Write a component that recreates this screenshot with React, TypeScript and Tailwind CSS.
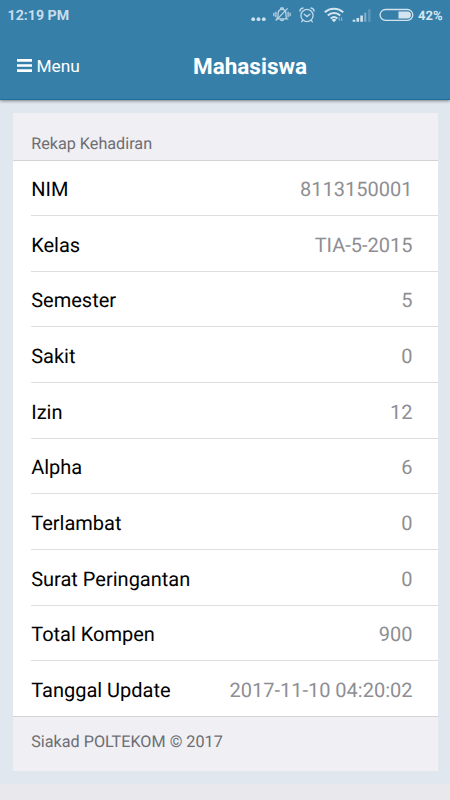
const rows: [string, string][] = [
  ["NIM", "8113150001"],
  ["Kelas", "TIA-5-2015"],
  ["Semester", "5"],
  ["Sakit", "0"],
  ["Izin", "12"],
  ["Alpha", "6"],
  ["Terlambat", "0"],
  ["Surat Peringantan", "0"],
  ["Total Kompen", "900"],
  ["Tanggal Update", "2017-11-10 04:20:02"],
];

function MoreIcon() {
  return (
    <svg className="h-4 w-[15px]" viewBox="0 0 15 16" fill="#cfe1f0">
      <circle cx="2.2" cy="12.2" r="1.9" />
      <circle cx="7.5" cy="12.2" r="1.9" />
      <circle cx="12.8" cy="12.2" r="1.9" />
    </svg>
  );
}

function MutedBellIcon() {
  return (
    <svg className="ml-[7px] h-4 w-[18px]" viewBox="0 0 18 16" fill="none" stroke="#b9d4e6" strokeWidth="1.3">
      <path d="M4 11.8H14C12.8 10.8 12.9 9.5 12.9 6.5C12.9 4 11.3 2.3 9 2.3S5.1 4 5.1 6.5C5.1 9.5 5.2 10.8 4 11.8ZM7.6 2.2L8 .8H10L10.4 2.2M7.3 12.3C7.5 14.1 10.5 14.1 10.7 12.3M2.8 13.6L14.6 1.4M2.9 4.7V10.3M.9 5.7V9.3M15.1 4.7V10.3M17.1 5.7V9.3" />
    </svg>
  );
}

function AlarmIcon() {
  return (
    <svg className="ml-[8px] h-4 w-4" viewBox="0 0 16 16" fill="none" stroke="#c3daea" strokeWidth="1.3" strokeLinecap="round">
      <circle cx="8" cy="8.5" r="6.1" />
      <path d="M.9 4.1C1.1 2.4 2.3 1.3 4 1M15.1 4.1C14.9 2.4 13.7 1.3 12 1M5.2 7.2L8 9.6L10.9 7.2M3.8 13.4L2.7 14.7M12.2 13.4L13.3 14.7" />
    </svg>
  );
}

function WifiIcon() {
  return (
    <svg className="ml-[9px] h-4 w-5" viewBox="0 0 20 16" fill="none" stroke="#d5e6f2" strokeWidth="2">
      <path d="M.8 5.3C5.8.4 14.2.4 19.2 5.3M3.8 8.5C7.2 5.2 12.8 5.2 16.2 8.5M6.7 11.4C8.6 9.7 11.4 9.7 13.3 11.4" />
      <path d="M7.6 12.8Q10 10.8 12.4 12.8L10 15.2Z" fill="#d5e6f2" stroke="none" />
      <path d="M15.3 14V10.5L14.3 11.7M17.6 10.2V13.8L18.6 12.6" stroke="#83b2cf" strokeWidth="1" />
    </svg>
  );
}

function SignalIcon() {
  return (
    <svg className="ml-[8px] h-4 w-5" viewBox="0 0 20 16">
      <path d="M.7 12.8H3.3V14.8H.7ZM4.5 11H7.1V14.8H4.5ZM8.3 8.5H10.9V14.8H8.3Z" fill="#d1e3f0" />
      <path d="M12.2 5.7H14.3V14.8H12.2Z" fill="#81b0cd" />
      <path d="M16 2.2H18.6V14.8H16Z" fill="#5b96ba" />
    </svg>
  );
}

function BatteryIcon() {
  return (
    <svg className="ml-[6.5px] h-4 w-[35px]" viewBox="0 0 35 16">
      <rect x="1.1" y="2.5" width="32.7" height="10.9" rx="5.45" fill="none" stroke="#d3e4f0" strokeWidth="1.3" />
      <path d="M19.5 4.4H28.5C33.2 4.4 33.2 11.5 28.5 11.5H19.5Z" fill="#d3e4f0" />
    </svg>
  );
}

export default function App() {
  return (
    <div className="flex h-[800px] w-[450px] flex-col overflow-hidden bg-[#e8e8ed] font-[Roboto,sans-serif] [text-rendering:geometricPrecision]">
      <header className="relative z-10 h-[100px] shrink-0 border-b border-[#17709d] bg-[#367fa9] shadow-[0_1px_3px_rgba(0,0,0,0.45)]">
        <div className="flex h-8 items-center pl-[7.5px] pr-2">
          <span className="flex-1 text-[14.2px] leading-8 font-bold text-[#c7ddec]">12:19 PM</span>
          <div className="flex h-8 shrink-0 items-start pt-[7.3px]">
            <MoreIcon />
            <MutedBellIcon />
            <AlarmIcon />
            <WifiIcon />
            <SignalIcon />
            <BatteryIcon />
            <span className="ml-[4.5px] w-6 pt-[2px] text-[13px] leading-4 font-bold text-[#d5e6f2]">42%</span>
          </div>
        </div>
        <div className="grid h-[67px] grid-cols-[100px_300px_50px] items-center text-white">
          <button className="flex items-center gap-[4.5px] pl-[17px] text-[17.3px]">
            <svg className="h-[13px] w-[15px] shrink-0" viewBox="0 0 15 13" fill="white">
              <path d="M0 0H15V2.7H0ZM0 5.15H15V7.85H0ZM0 10.3H15V13H0Z" />
            </svg>
            <span className="pt-[2px]">Menu</span>
          </button>
          <h1 className="pt-1 text-center text-[22.5px] font-bold">Mahasiswa</h1>
        </div>
      </header>
      <main className="h-[683.5px] shrink-0 bg-[#e0e7ee] px-[12.5px] pt-[12.5px]">
        <section className="h-[658px] bg-[#efeff4]">
          <h2 className="h-[48px] border-b border-[#d2d2d7] pt-[19px] pl-[18.7px] text-[16.2px] leading-6 text-[#6d6d72]">Rekap Kehadiran</h2>
          <dl className="bg-white pl-[18.7px]">
            {rows.map(([label, value]) => (
              <div key={label} className="flex h-[55.65px] items-center justify-between border-b border-[#dedee1] pt-[2.4px] pr-[25px] text-[20px] last:h-[55px] last:border-b-0">
                <dt className="text-black">{label}</dt>
                <dd className="text-[#8e8e93]">{value}</dd>
              </div>
            ))}
          </dl>
          <footer className="border-t border-[#d2d2d7] pt-[13px] pl-[18.7px] text-[16.2px] leading-6 text-[#6d6d72]">Siakad POLTEKOM © 2017</footer>
        </section>
      </main>
    </div>
  );
}
